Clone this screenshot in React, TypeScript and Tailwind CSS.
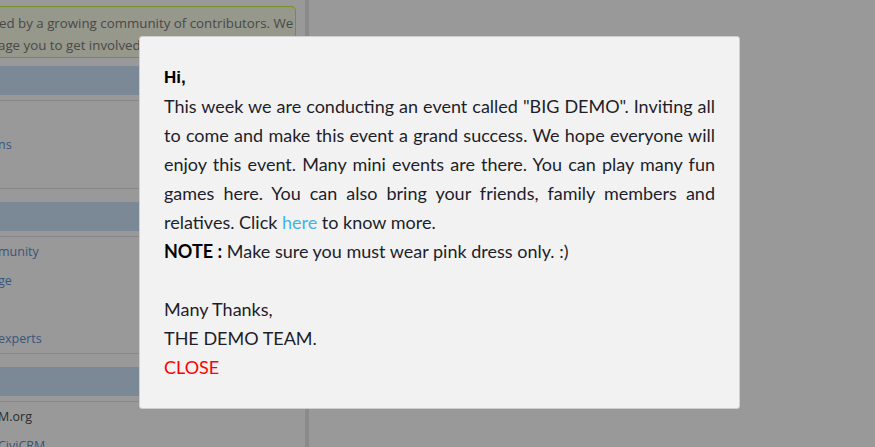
import React from 'react';

const SIDE_FONT = { fontFamily: '"Open Sans", "Liberation Sans", sans-serif' };
const MODAL_FONT = { fontFamily: 'Lato, "Liberation Sans", sans-serif' };

type Item = { text: string; dark?: boolean };

const SideSection = ({ items }: { items: Item[] }) => (
  <div className="mb-[13px]">
    <div className="h-[29px] bg-[#cde5fa]" />
    <div className="mt-[5px] border-t border-b border-[#e2e2e2]">
      {items.map((item, i) => (
        <div
          key={i}
          className={`h-[29px] leading-[29px] text-[12.5px] -ml-[2px] whitespace-nowrap ${item.dark ? 'text-[#4c4c4c]' : 'text-[#5e8fd0]'}`}
        >
          {item.text}
        </div>
      ))}
    </div>
  </div>
);

const App = () => {
  return (
    <div className="relative w-[875px] h-[447px] overflow-hidden bg-white">
      {/* page underneath */}
      <div className="flex h-full">
        <div className="w-[309px] shrink-0 bg-white border-r-[4px] border-[#e6e6e6] overflow-hidden" style={SIDE_FONT}>
          <div className="w-[296px] pt-[6px]">
            <div className="h-[52px] bg-[#fbfde9] border border-[#c9f23c] border-l-0 rounded-r-[5px] pt-[5px] text-[13.3px] leading-[22px] text-[#7a7a7a] whitespace-nowrap">
              <div className="-ml-[1px]">ed by a growing community of contributors. We</div>
              <div className="-ml-[2px]">age you to get involved in the project.</div>
            </div>
          </div>
          <div className="w-[303px] mt-[8px]">
            <SideSection items={[{ text: '' }, { text: 'ns' }, { text: '' }]} />
            <SideSection items={[{ text: 'munity' }, { text: 'ge' }, { text: '' }, { text: 'experts' }]} />
            <SideSection items={[{ text: 'M.org', dark: true }, { text: 'CiviCRM' }]} />
          </div>
        </div>
        <div className="flex-1 bg-white" />
      </div>

      {/* dim overlay */}
      <div className="absolute inset-0 bg-black/40" />

      {/* modal */}
      <div
        className="absolute left-[139px] top-[36px] w-[601px] bg-[#f2f2f2] border border-[#cfcfcf] rounded-[3px] px-[24px] pt-[26px] pb-[26px] text-[18px] leading-[29px] text-[#1e1e2a]"
        style={MODAL_FONT}
      >
        <div className="font-bold text-[17px] text-black" style={{ fontFamily: '"Liberation Sans", Arial, sans-serif' }}>
          Hi,
        </div>
        <div className="text-justify [text-align-last:justify]">
          This week we are conducting an event called "BIG DEMO". Inviting all
        </div>
        <div className="text-justify [text-align-last:justify]">
          to come and make this event a grand success. We hope everyone will
        </div>
        <div className="text-justify [text-align-last:justify]">
          enjoy this event. Many mini events are there. You can play many fun
        </div>
        <div className="text-justify [text-align-last:justify]">
          games here. You can also bring your friends, family members and
        </div>
        <div>
          relatives. Click <a className="text-[#3fb4ea]">here</a> to know more.
        </div>
        <div>
          <b className="text-black">NOTE :</b> Make sure you must wear pink dress only. :)
        </div>
        <div className="h-[29px]" />
        <div>Many Thanks,</div>
        <div>THE DEMO TEAM.</div>
        <div className="text-[#ff0000] cursor-pointer">CLOSE</div>
      </div>
    </div>
  );
};

export default App;
